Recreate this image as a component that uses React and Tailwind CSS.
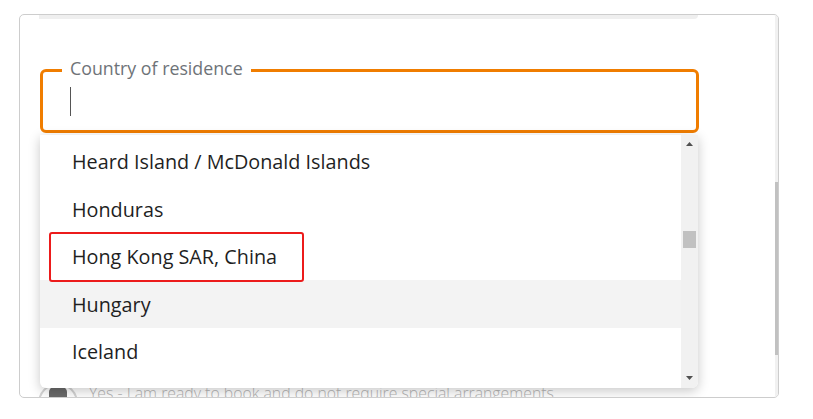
import React from "react";

const countries = [
  "Heard Island / McDonald Islands",
  "Honduras",
  "Hong Kong SAR, China",
  "Hungary",
  "Iceland",
  "India",
];

const App = () => {
  return (
    <div
      className="relative w-[813px] h-[419px] bg-white overflow-hidden"
      style={{ fontFamily: '"Open Sans", "Liberation Sans", sans-serif' }}
    >
      <div className="ml-[19px] mt-[14px] w-[760px] h-[384px] border border-[#cdcdcd] rounded-[5px] flex overflow-hidden">
        <div className="relative flex-1">
          <div className="ml-[19px] w-[659px] h-[4px] bg-[#efefef] rounded-br-[6px]" />

          {/* input */}
          <div className="relative ml-[20px] mt-[50px] w-[659px] h-[64px] border-[3px] border-[#f07d00] rounded-[6px]">
            <span className="absolute left-[19px] top-[-15px] px-[8px] bg-white text-[17.8px] leading-[22px] text-[#6e7378]">
              Country of residence
            </span>
            <span className="absolute left-[27px] top-[15px] w-px h-[29px] bg-[#555]" />
          </div>

          {/* content behind dropdown */}
          <div className="mt-[250px] ml-[18px] flex items-start">
            <div className="shrink-0 w-[40px] h-[40px] rounded-full border-2 border-[#d4d4d4] flex justify-center pt-[2px]">
              <div className="w-[18px] h-[18px] rounded-[5px] bg-[#6a6a6a]" />
            </div>
            <span className="ml-[11px] whitespace-nowrap text-[15.8px] font-light leading-[20px] text-[#b5b5b5]">
              Yes - I am ready to book and do not require special arrangements.
            </span>
          </div>

          {/* dropdown */}
          <div className="absolute top-[120px] left-[20px] w-[658px] h-[253px] bg-white rounded-b-[6px] shadow-[0_3px_12px_rgba(0,0,0,0.22)] flex overflow-hidden">
            <div className="flex-1 pt-[2.5px] overflow-hidden">
              {countries.map((c) => (
                <div
                  key={c}
                  className={
                    c === "Hungary"
                      ? "h-[47.5px] flex items-center pl-[32px] pt-[2px] text-[19.8px] text-[#1f1f1f] bg-[#f3f3f3]"
                      : "h-[47.5px] flex items-center pl-[32px] pt-[2px] text-[19.8px] text-[#1f1f1f]"
                  }
                >
                  {c}
                </div>
              ))}
            </div>
            <div className="relative w-[17px] bg-[#f1f1f1]">
              <svg className="absolute left-[5px] top-[7px]" width="7" height="4" viewBox="0 0 7 4">
                <path d="M3.5 0 L7 4 L0 4 Z" fill="#505050" />
              </svg>
              <div className="absolute left-[2px] top-[96px] w-[13px] h-[17px] bg-[#c1c1c1]" />
              <svg className="absolute left-[5px] top-[241px]" width="7" height="4" viewBox="0 0 7 4">
                <path d="M0 0 L7 0 L3.5 4 Z" fill="#505050" />
              </svg>
            </div>
          </div>
        </div>

        {/* card scrollbar */}
        <div className="w-[3px] bg-[#f1f1f1]">
          <div className="mt-[167px] h-[173px] bg-[#c1c1c1]" />
        </div>
      </div>

      {/* annotation */}
      <div className="absolute left-[49px] top-[232px] w-[255px] h-[50px] border-[2.5px] border-[#ec1b1b] rounded-[3px]" />
    </div>
  );
};

export default App;
